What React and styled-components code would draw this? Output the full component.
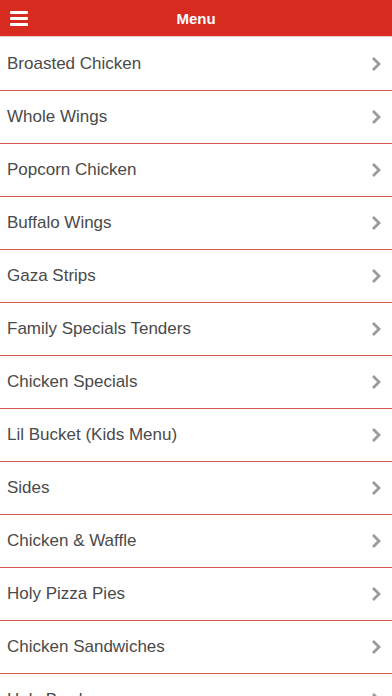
import React from 'react';
import styled, { createGlobalStyle } from 'styled-components';

const items = [
  'Broasted Chicken',
  'Whole Wings',
  'Popcorn Chicken',
  'Buffalo Wings',
  'Gaza Strips',
  'Family Specials Tenders',
  'Chicken Specials',
  'Lil Bucket (Kids Menu)',
  'Sides',
  'Chicken & Waffle',
  'Holy Pizza Pies',
  'Chicken Sandwiches',
  'Holy Bowls',
];

const GlobalStyle = createGlobalStyle`
  html, body {
    margin: 0;
    padding: 0;
    background: #fff;
    font-family: "Liberation Sans", Arial, sans-serif;
    overflow: hidden;
  }
`;

const Page = styled.div`
  width: 392px;
  height: 696px;
  overflow: hidden;
`;

const Header = styled.header`
  position: relative;
  height: 36px;
  background: #d72b20;
  border-bottom: 1px solid #f3c9c4;
  display: flex;
  align-items: center;
  justify-content: center;
`;

const MenuButton = styled.button`
  position: absolute;
  left: 10px;
  top: 11px;
  width: 18px;
  height: 15px;
  padding: 0;
  border: 0;
  background: none;
  display: flex;
  flex-direction: column;
  justify-content: space-between;
`;

const Bar = styled.span`
  display: block;
  height: 3px;
  border-radius: 1px;
  background: #fff;
`;

const Title = styled.h1`
  margin: 0;
  color: #fff;
  font-size: 15px;
  font-weight: bold;
`;

const List = styled.ul`
  list-style: none;
  margin: 0;
  padding: 0;
`;

const Row = styled.li`
  height: 52px;
  border-bottom: 1px solid #d9584c;
  display: flex;
  align-items: center;
  justify-content: space-between;
  padding: 0 10px 0 7px;

  &:first-child {
    height: 53px;
  }
`;

const Label = styled.span`
  color: #4a4a4a;
  font-size: 17px;
`;

const Chevron = () => (
  <svg width="12" height="16" viewBox="0 0 12 16">
    <path d="M3 2 L9 8 L3 14" fill="none" stroke="#9b9b9b" strokeWidth="2.8" />
  </svg>
);

export default function App() {
  return (
    <Page>
      <GlobalStyle />
      <Header>
        <MenuButton aria-label="menu">
          <Bar />
          <Bar />
          <Bar />
        </MenuButton>
        <Title>Menu</Title>
      </Header>
      <List>
        {items.map((item) => (
          <Row key={item}>
            <Label>{item}</Label>
            <Chevron />
          </Row>
        ))}
      </List>
    </Page>
  );
}
